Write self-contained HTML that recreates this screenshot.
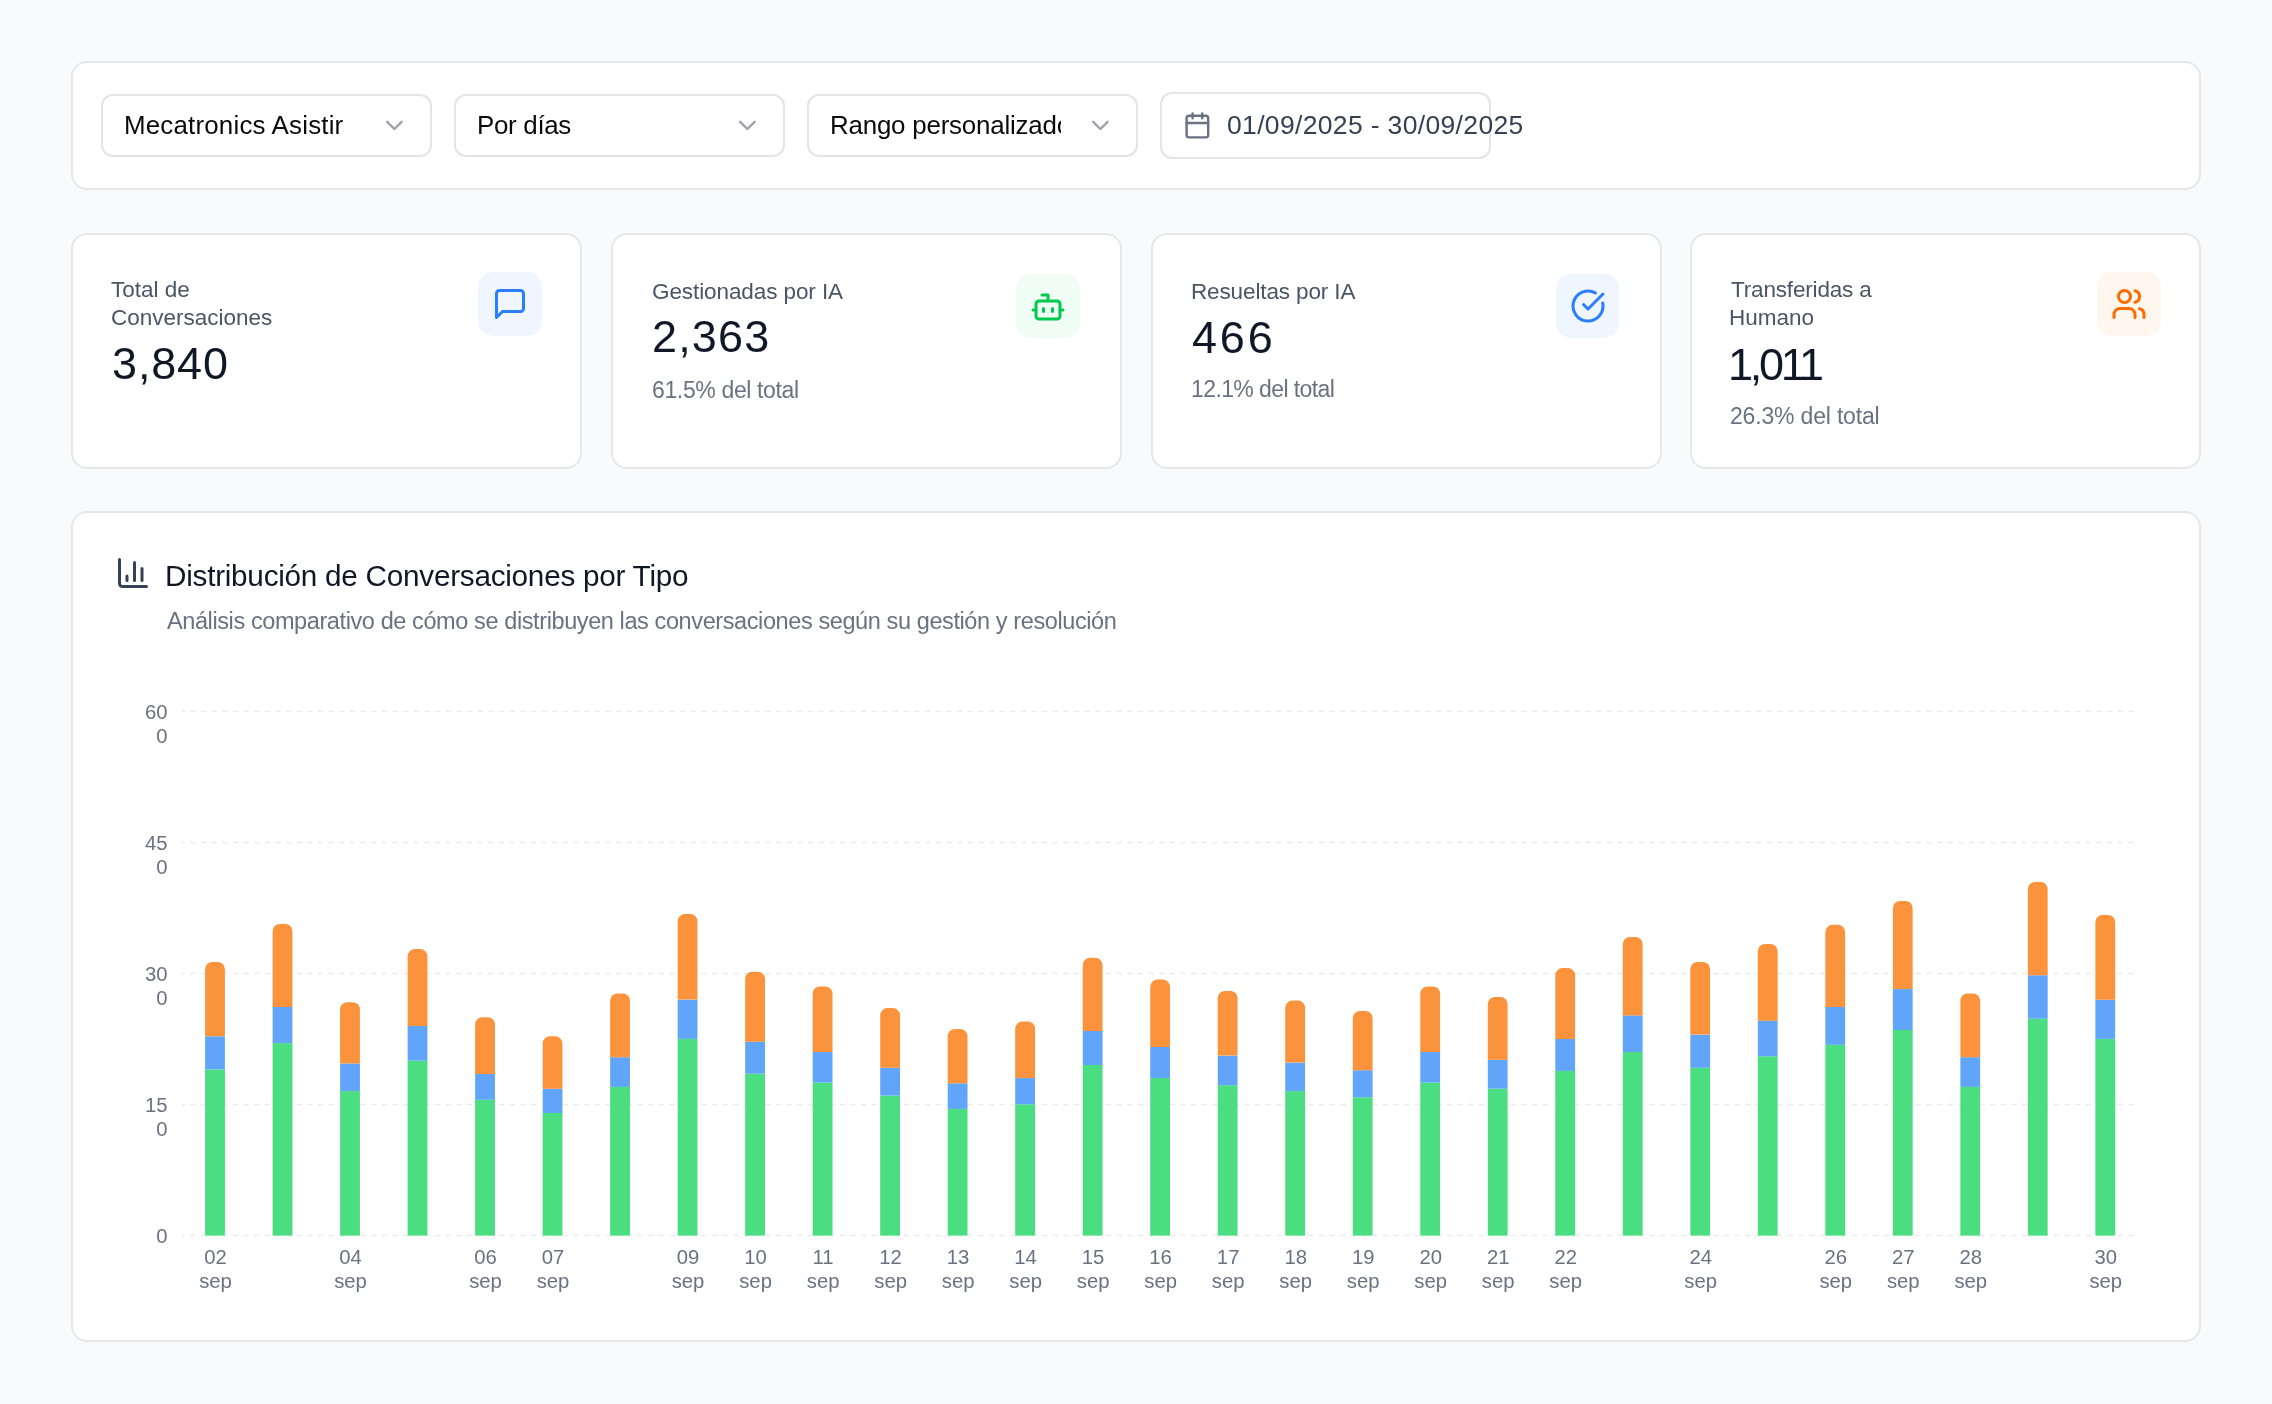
<!DOCTYPE html>
<html><head><meta charset="utf-8">
<style>
html,body{margin:0;padding:0;}
body{width:2272px;height:1404px;overflow:hidden;background:#f9fafb;position:relative;font-family:"Liberation Sans",sans-serif;}
.card{position:absolute;box-sizing:border-box;background:#fff;border:2px solid #e5e7eb;border-radius:16px;}
.sel{position:absolute;box-sizing:border-box;background:#fff;border:2px solid #e4e4e8;border-radius:12px;}
.t{position:absolute;white-space:nowrap;line-height:1;will-change:transform;}
.chev{position:absolute;color:#a1a1aa;}
.ib{position:absolute;border-radius:15px;}
.ib svg{position:absolute;left:50%;top:50%;margin-left:-18px;margin-top:-18px;}
.ax{font-family:"Liberation Sans",sans-serif;font-size:20.3px;fill:#6a7282;}
</style></head>
<body>
<div class="card" style="left:71px;top:61px;width:2130px;height:129px"></div>
<div class="sel" style="left:101px;top:93.5px;width:331px;height:63.5px"></div>
<div class="sel" style="left:454px;top:93.5px;width:331px;height:63.5px"></div>
<div class="sel" style="left:807px;top:93.5px;width:331px;height:63.5px"></div>
<div class="sel" style="left:1159.5px;top:92px;width:331px;height:67px"></div>
<div class="t" style="left:124.2px;top:112.68px;font-size:25.9px;color:#0a0a0a;letter-spacing:0.19px;">Mecatronics Asistir</div>
<div class="t" style="left:476.6px;top:112.68px;font-size:25.9px;color:#0a0a0a;letter-spacing:-0.3px;">Por días</div>
<div style="position:absolute;left:820px;top:100px;width:240.5px;height:50px;overflow:hidden"><div class="t" style="left:9.9px;top:12.68px;font-size:25.9px;color:#0a0a0a;letter-spacing:-0.2px;">Rango personalizado</div></div>
<div class="chev" style="left:380.2px;top:111.4px"><svg class="chev" viewBox="0 0 24 24" width="28.8" height="28.8" fill="none" stroke="currentColor" stroke-width="2" stroke-linecap="round" stroke-linejoin="round"><path d="m6 9 6 6 6-6"/></svg></div>
<div class="chev" style="left:733.1px;top:111.4px"><svg class="chev" viewBox="0 0 24 24" width="28.8" height="28.8" fill="none" stroke="currentColor" stroke-width="2" stroke-linecap="round" stroke-linejoin="round"><path d="m6 9 6 6 6-6"/></svg></div>
<div class="chev" style="left:1085.7px;top:111.4px"><svg class="chev" viewBox="0 0 24 24" width="28.8" height="28.8" fill="none" stroke="currentColor" stroke-width="2" stroke-linecap="round" stroke-linejoin="round"><path d="m6 9 6 6 6-6"/></svg></div>
<svg style="position:absolute;left:1182.6px;top:111px" viewBox="0 0 24 24" width="28.8" height="28.8" fill="none" stroke="#6a7282" stroke-width="2" stroke-linecap="round" stroke-linejoin="round"><path d="M8 2v4"/><path d="M16 2v4"/><rect width="18" height="18" x="3" y="4" rx="2"/><path d="M3 10h18"/></svg>
<div class="t" style="left:1226.6px;top:111.87px;font-size:26.5px;color:#364153;letter-spacing:0.34px;">01/09/2025 - 30/09/2025</div>

<div class="card" style="left:71px;top:232.5px;width:511px;height:236px"></div>
<div class="card" style="left:611px;top:232.5px;width:511px;height:236px"></div>
<div class="card" style="left:1150.5px;top:232.5px;width:511px;height:236px"></div>
<div class="card" style="left:1690px;top:232.5px;width:511px;height:236px"></div>

<div class="t" style="left:111px;top:278.75px;font-size:22.5px;color:#4a5565;letter-spacing:0px;">Total de</div>
<div class="t" style="left:111px;top:306.85px;font-size:22.5px;color:#4a5565;letter-spacing:0px;">Conversaciones</div>
<div class="t" style="left:111.8px;top:340.91px;font-size:45px;color:#101828;letter-spacing:0.85px;">3,840</div>
<div class="ib" style="left:478.4px;top:272.1px;width:63.5px;height:64px;background:#eff6ff"><svg viewBox="0 0 24 24" width="36" height="36" fill="none" stroke="#2b7fff" stroke-width="2" stroke-linecap="round" stroke-linejoin="round"><path d="M21 15a2 2 0 0 1-2 2H7l-4 4V5a2 2 0 0 1 2-2h14a2 2 0 0 1 2 2z"/></svg></div>

<div class="t" style="left:652.2px;top:280.75px;font-size:22.5px;color:#4a5565;letter-spacing:-0.09px;">Gestionadas por IA</div>
<div class="t" style="left:652.2px;top:313.91px;font-size:45px;color:#101828;letter-spacing:1.15px;">2,363</div>
<div class="t" style="left:652.2px;top:378.73px;font-size:23px;color:#6a7282;letter-spacing:-0.36px;">61.5% del total</div>
<div class="ib" style="left:1016px;top:273.8px;width:64px;height:64.4px;background:#f0fdf4"><svg style="margin-top:-17.2px" viewBox="0 0 24 24" width="36" height="36" fill="none" stroke="#00c950" stroke-width="2" stroke-linecap="round" stroke-linejoin="round"><path d="M12 8V4H8"/><rect width="16" height="12" x="4" y="8" rx="2"/><path d="M2 14h2"/><path d="M20 14h2"/><path d="M15 13v2"/><path d="M9 13v2"/></svg></div>

<div class="t" style="left:1191px;top:281.25px;font-size:22.5px;color:#4a5565;letter-spacing:-0.13px;">Resueltas por IA</div>
<div class="t" style="left:1192px;top:315.01px;font-size:45px;color:#101828;letter-spacing:2.8px;">466</div>
<div class="t" style="left:1191px;top:378.03px;font-size:23px;color:#6a7282;letter-spacing:-0.6px;">12.1% del total</div>
<div class="ib" style="left:1555.7px;top:274.2px;width:63.8px;height:64px;background:#eff6ff"><svg viewBox="0 0 24 24" width="36" height="36" fill="none" stroke="#2b7fff" stroke-width="2" stroke-linecap="round" stroke-linejoin="round"><path d="M21.801 10A10 10 0 1 1 17 3.335"/><path d="m9 11 3 3L22 4"/></svg></div>

<div class="t" style="left:1731px;top:279.25px;font-size:22.5px;color:#4a5565;letter-spacing:-0.17px;">Transferidas a</div>
<div class="t" style="left:1729px;top:306.85px;font-size:22.5px;color:#4a5565;letter-spacing:0px;">Humano</div>
<div class="t" style="left:1728px;top:341.61px;font-size:45px;color:#101828;letter-spacing:-3.3px;">1,011</div>
<div class="t" style="left:1730px;top:405.13px;font-size:23px;color:#6a7282;letter-spacing:-0.18px;">26.3% del total</div>
<div class="ib" style="left:2097.3px;top:272.3px;width:63.5px;height:63.8px;background:#fff7ed"><svg viewBox="0 0 24 24" width="36" height="36" fill="none" stroke="#ff6900" stroke-width="2" stroke-linecap="round" stroke-linejoin="round"><path d="M16 21v-2a4 4 0 0 0-4-4H6a4 4 0 0 0-4 4v2"/><circle cx="9" cy="7" r="4"/><path d="M22 21v-2a4 4 0 0 0-3-3.87"/><path d="M16 3.13a4 4 0 0 1 0 7.75"/></svg></div>

<div class="card" style="left:71px;top:511px;width:2130px;height:830.6px"></div>
<svg style="position:absolute;left:115.2px;top:555.4px" viewBox="0 0 24 24" width="36" height="36" fill="none" stroke="#364153" stroke-width="2" stroke-linecap="round" stroke-linejoin="round"><path d="M3 3v16a2 2 0 0 0 2 2h16"/><path d="M18 17V9"/><path d="M13 17V5"/><path d="M8 17v-3"/></svg>
<div class="t" style="left:165.1px;top:561.06px;font-size:29.7px;color:#101828;letter-spacing:-0.25px;">Distribución de Conversaciones por Tipo</div>
<div class="t" style="left:166.7px;top:610.11px;font-size:23.5px;color:#6a7282;letter-spacing:-0.4px;">Análisis comparativo de cómo se distribuyen las conversaciones según su gestión y resolución</div>

<svg style="position:absolute;left:0;top:0;will-change:transform" width="2272" height="1404" viewBox="0 0 2272 1404">
<line x1="182" y1="711.5" x2="2139.7" y2="711.5" stroke="#ebebed" stroke-width="1.5" stroke-dasharray="5.4 5.25" stroke-dashoffset="2.6"/>
<line x1="182" y1="842.5" x2="2139.7" y2="842.5" stroke="#ebebed" stroke-width="1.5" stroke-dasharray="5.4 5.25" stroke-dashoffset="2.6"/>
<line x1="182" y1="973.5" x2="2139.7" y2="973.5" stroke="#ebebed" stroke-width="1.5" stroke-dasharray="5.4 5.25" stroke-dashoffset="2.6"/>
<line x1="182" y1="1104.5" x2="2139.7" y2="1104.5" stroke="#ebebed" stroke-width="1.5" stroke-dasharray="5.4 5.25" stroke-dashoffset="2.6"/>
<line x1="182" y1="1235.4" x2="2139.7" y2="1235.4" stroke="#ebebed" stroke-width="1.5" stroke-dasharray="5.4 5.25" stroke-dashoffset="2.6"/>
<rect x="205.1" y="1069.4" width="19.8" height="166.2" fill="#4ade80"/>
<rect x="205.1" y="1036.3" width="19.8" height="33.1" fill="#60a5fa"/>
<path d="M205.1 1036.3V969.2a7.2 7.2 0 0 1 7.2 -7.2h5.4a7.2 7.2 0 0 1 7.2 7.2V1036.3z" fill="#fb923c"/>
<rect x="272.61" y="1043.1" width="19.8" height="192.5" fill="#4ade80"/>
<rect x="272.61" y="1006.9" width="19.8" height="36.2" fill="#60a5fa"/>
<path d="M272.61 1006.9V931.1a7.2 7.2 0 0 1 7.2 -7.2h5.4a7.2 7.2 0 0 1 7.2 7.2V1006.9z" fill="#fb923c"/>
<rect x="340.12" y="1091.1" width="19.8" height="144.5" fill="#4ade80"/>
<rect x="340.12" y="1063.5" width="19.8" height="27.6" fill="#60a5fa"/>
<path d="M340.12 1063.5V1009.4a7.2 7.2 0 0 1 7.2 -7.2h5.4a7.2 7.2 0 0 1 7.2 7.2V1063.5z" fill="#fb923c"/>
<rect x="407.63" y="1060.7" width="19.8" height="174.9" fill="#4ade80"/>
<rect x="407.63" y="1025.9" width="19.8" height="34.8" fill="#60a5fa"/>
<path d="M407.63 1025.9V956.3a7.2 7.2 0 0 1 7.2 -7.2h5.4a7.2 7.2 0 0 1 7.2 7.2V1025.9z" fill="#fb923c"/>
<rect x="475.14" y="1099.8" width="19.8" height="135.8" fill="#4ade80"/>
<rect x="475.14" y="1073.9" width="19.8" height="25.9" fill="#60a5fa"/>
<path d="M475.14 1073.9V1024.4a7.2 7.2 0 0 1 7.2 -7.2h5.4a7.2 7.2 0 0 1 7.2 7.2V1073.9z" fill="#fb923c"/>
<rect x="542.65" y="1113" width="19.8" height="122.6" fill="#4ade80"/>
<rect x="542.65" y="1088.7" width="19.8" height="24.3" fill="#60a5fa"/>
<path d="M542.65 1088.7V1043.5a7.2 7.2 0 0 1 7.2 -7.2h5.4a7.2 7.2 0 0 1 7.2 7.2V1088.7z" fill="#fb923c"/>
<rect x="610.16" y="1086.9" width="19.8" height="148.7" fill="#4ade80"/>
<rect x="610.16" y="1057.2" width="19.8" height="29.7" fill="#60a5fa"/>
<path d="M610.16 1057.2V1000.7a7.2 7.2 0 0 1 7.2 -7.2h5.4a7.2 7.2 0 0 1 7.2 7.2V1057.2z" fill="#fb923c"/>
<rect x="677.67" y="1038.9" width="19.8" height="196.7" fill="#4ade80"/>
<rect x="677.67" y="999.6" width="19.8" height="39.3" fill="#60a5fa"/>
<path d="M677.67 999.6V921.3a7.2 7.2 0 0 1 7.2 -7.2h5.4a7.2 7.2 0 0 1 7.2 7.2V999.6z" fill="#fb923c"/>
<rect x="745.18" y="1073.7" width="19.8" height="161.9" fill="#4ade80"/>
<rect x="745.18" y="1041.7" width="19.8" height="32" fill="#60a5fa"/>
<path d="M745.18 1041.7V978.9a7.2 7.2 0 0 1 7.2 -7.2h5.4a7.2 7.2 0 0 1 7.2 7.2V1041.7z" fill="#fb923c"/>
<rect x="812.69" y="1082.6" width="19.8" height="153" fill="#4ade80"/>
<rect x="812.69" y="1052" width="19.8" height="30.6" fill="#60a5fa"/>
<path d="M812.69 1052V993.7a7.2 7.2 0 0 1 7.2 -7.2h5.4a7.2 7.2 0 0 1 7.2 7.2V1052z" fill="#fb923c"/>
<rect x="880.2" y="1095.6" width="19.8" height="140" fill="#4ade80"/>
<rect x="880.2" y="1067.8" width="19.8" height="27.8" fill="#60a5fa"/>
<path d="M880.2 1067.8V1015.3a7.2 7.2 0 0 1 7.2 -7.2h5.4a7.2 7.2 0 0 1 7.2 7.2V1067.8z" fill="#fb923c"/>
<rect x="947.71" y="1108.9" width="19.8" height="126.7" fill="#4ade80"/>
<rect x="947.71" y="1083.3" width="19.8" height="25.6" fill="#60a5fa"/>
<path d="M947.71 1083.3V1036.3a7.2 7.2 0 0 1 7.2 -7.2h5.4a7.2 7.2 0 0 1 7.2 7.2V1083.3z" fill="#fb923c"/>
<rect x="1015.22" y="1104.3" width="19.8" height="131.3" fill="#4ade80"/>
<rect x="1015.22" y="1078.1" width="19.8" height="26.2" fill="#60a5fa"/>
<path d="M1015.22 1078.1V1028.7a7.2 7.2 0 0 1 7.2 -7.2h5.4a7.2 7.2 0 0 1 7.2 7.2V1078.1z" fill="#fb923c"/>
<rect x="1082.73" y="1065" width="19.8" height="170.6" fill="#4ade80"/>
<rect x="1082.73" y="1030.9" width="19.8" height="34.1" fill="#60a5fa"/>
<path d="M1082.73 1030.9V965a7.2 7.2 0 0 1 7.2 -7.2h5.4a7.2 7.2 0 0 1 7.2 7.2V1030.9z" fill="#fb923c"/>
<rect x="1150.24" y="1078" width="19.8" height="157.6" fill="#4ade80"/>
<rect x="1150.24" y="1046.9" width="19.8" height="31.1" fill="#60a5fa"/>
<path d="M1150.24 1046.9V986.8a7.2 7.2 0 0 1 7.2 -7.2h5.4a7.2 7.2 0 0 1 7.2 7.2V1046.9z" fill="#fb923c"/>
<rect x="1217.75" y="1085.2" width="19.8" height="150.4" fill="#4ade80"/>
<rect x="1217.75" y="1055.6" width="19.8" height="29.6" fill="#60a5fa"/>
<path d="M1217.75 1055.6V998.1a7.2 7.2 0 0 1 7.2 -7.2h5.4a7.2 7.2 0 0 1 7.2 7.2V1055.6z" fill="#fb923c"/>
<rect x="1285.26" y="1091.1" width="19.8" height="144.5" fill="#4ade80"/>
<rect x="1285.26" y="1062.6" width="19.8" height="28.5" fill="#60a5fa"/>
<path d="M1285.26 1062.6V1007.8a7.2 7.2 0 0 1 7.2 -7.2h5.4a7.2 7.2 0 0 1 7.2 7.2V1062.6z" fill="#fb923c"/>
<rect x="1352.77" y="1097.2" width="19.8" height="138.4" fill="#4ade80"/>
<rect x="1352.77" y="1070.2" width="19.8" height="27" fill="#60a5fa"/>
<path d="M1352.77 1070.2V1018.1a7.2 7.2 0 0 1 7.2 -7.2h5.4a7.2 7.2 0 0 1 7.2 7.2V1070.2z" fill="#fb923c"/>
<rect x="1420.28" y="1082.6" width="19.8" height="153" fill="#4ade80"/>
<rect x="1420.28" y="1052" width="19.8" height="30.6" fill="#60a5fa"/>
<path d="M1420.28 1052V993.7a7.2 7.2 0 0 1 7.2 -7.2h5.4a7.2 7.2 0 0 1 7.2 7.2V1052z" fill="#fb923c"/>
<rect x="1487.79" y="1088.7" width="19.8" height="146.9" fill="#4ade80"/>
<rect x="1487.79" y="1059.8" width="19.8" height="28.9" fill="#60a5fa"/>
<path d="M1487.79 1059.8V1004.2a7.2 7.2 0 0 1 7.2 -7.2h5.4a7.2 7.2 0 0 1 7.2 7.2V1059.8z" fill="#fb923c"/>
<rect x="1555.3" y="1070.9" width="19.8" height="164.7" fill="#4ade80"/>
<rect x="1555.3" y="1038.9" width="19.8" height="32" fill="#60a5fa"/>
<path d="M1555.3 1038.9V975.3a7.2 7.2 0 0 1 7.2 -7.2h5.4a7.2 7.2 0 0 1 7.2 7.2V1038.9z" fill="#fb923c"/>
<rect x="1622.81" y="1052" width="19.8" height="183.6" fill="#4ade80"/>
<rect x="1622.81" y="1015.4" width="19.8" height="36.6" fill="#60a5fa"/>
<path d="M1622.81 1015.4V944.1a7.2 7.2 0 0 1 7.2 -7.2h5.4a7.2 7.2 0 0 1 7.2 7.2V1015.4z" fill="#fb923c"/>
<rect x="1690.32" y="1067.8" width="19.8" height="167.8" fill="#4ade80"/>
<rect x="1690.32" y="1034.6" width="19.8" height="33.2" fill="#60a5fa"/>
<path d="M1690.32 1034.6V969.2a7.2 7.2 0 0 1 7.2 -7.2h5.4a7.2 7.2 0 0 1 7.2 7.2V1034.6z" fill="#fb923c"/>
<rect x="1757.83" y="1056.3" width="19.8" height="179.3" fill="#4ade80"/>
<rect x="1757.83" y="1020.7" width="19.8" height="35.6" fill="#60a5fa"/>
<path d="M1757.83 1020.7V951.1a7.2 7.2 0 0 1 7.2 -7.2h5.4a7.2 7.2 0 0 1 7.2 7.2V1020.7z" fill="#fb923c"/>
<rect x="1825.34" y="1044.8" width="19.8" height="190.8" fill="#4ade80"/>
<rect x="1825.34" y="1006.9" width="19.8" height="37.9" fill="#60a5fa"/>
<path d="M1825.34 1006.9V932a7.2 7.2 0 0 1 7.2 -7.2h5.4a7.2 7.2 0 0 1 7.2 7.2V1006.9z" fill="#fb923c"/>
<rect x="1892.85" y="1030" width="19.8" height="205.6" fill="#4ade80"/>
<rect x="1892.85" y="989.1" width="19.8" height="40.9" fill="#60a5fa"/>
<path d="M1892.85 989.1V908.1a7.2 7.2 0 0 1 7.2 -7.2h5.4a7.2 7.2 0 0 1 7.2 7.2V989.1z" fill="#fb923c"/>
<rect x="1960.36" y="1086.9" width="19.8" height="148.7" fill="#4ade80"/>
<rect x="1960.36" y="1057.2" width="19.8" height="29.7" fill="#60a5fa"/>
<path d="M1960.36 1057.2V1000.7a7.2 7.2 0 0 1 7.2 -7.2h5.4a7.2 7.2 0 0 1 7.2 7.2V1057.2z" fill="#fb923c"/>
<rect x="2027.87" y="1018.7" width="19.8" height="216.9" fill="#4ade80"/>
<rect x="2027.87" y="975.2" width="19.8" height="43.5" fill="#60a5fa"/>
<path d="M2027.87 975.2V889.1a7.2 7.2 0 0 1 7.2 -7.2h5.4a7.2 7.2 0 0 1 7.2 7.2V975.2z" fill="#fb923c"/>
<rect x="2095.38" y="1038.9" width="19.8" height="196.7" fill="#4ade80"/>
<rect x="2095.38" y="999.8" width="19.8" height="39.1" fill="#60a5fa"/>
<path d="M2095.38 999.8V922.2a7.2 7.2 0 0 1 7.2 -7.2h5.4a7.2 7.2 0 0 1 7.2 7.2V999.8z" fill="#fb923c"/>
<text x="167.6" y="718.85" text-anchor="end" class="ax">60</text>
<text x="167.6" y="742.85" text-anchor="end" class="ax">0</text>
<text x="167.6" y="849.9" text-anchor="end" class="ax">45</text>
<text x="167.6" y="873.9" text-anchor="end" class="ax">0</text>
<text x="167.6" y="980.95" text-anchor="end" class="ax">30</text>
<text x="167.6" y="1004.95" text-anchor="end" class="ax">0</text>
<text x="167.6" y="1112" text-anchor="end" class="ax">15</text>
<text x="167.6" y="1136" text-anchor="end" class="ax">0</text>
<text x="167.6" y="1243.05" text-anchor="end" class="ax">0</text>
<text x="215.5" y="1263.8" text-anchor="middle" class="ax">02</text>
<text x="215.5" y="1287.9" text-anchor="middle" class="ax">sep</text>
<text x="350.52" y="1263.8" text-anchor="middle" class="ax">04</text>
<text x="350.52" y="1287.9" text-anchor="middle" class="ax">sep</text>
<text x="485.54" y="1263.8" text-anchor="middle" class="ax">06</text>
<text x="485.54" y="1287.9" text-anchor="middle" class="ax">sep</text>
<text x="553.05" y="1263.8" text-anchor="middle" class="ax">07</text>
<text x="553.05" y="1287.9" text-anchor="middle" class="ax">sep</text>
<text x="688.07" y="1263.8" text-anchor="middle" class="ax">09</text>
<text x="688.07" y="1287.9" text-anchor="middle" class="ax">sep</text>
<text x="755.58" y="1263.8" text-anchor="middle" class="ax">10</text>
<text x="755.58" y="1287.9" text-anchor="middle" class="ax">sep</text>
<text x="823.09" y="1263.8" text-anchor="middle" class="ax">11</text>
<text x="823.09" y="1287.9" text-anchor="middle" class="ax">sep</text>
<text x="890.6" y="1263.8" text-anchor="middle" class="ax">12</text>
<text x="890.6" y="1287.9" text-anchor="middle" class="ax">sep</text>
<text x="958.11" y="1263.8" text-anchor="middle" class="ax">13</text>
<text x="958.11" y="1287.9" text-anchor="middle" class="ax">sep</text>
<text x="1025.62" y="1263.8" text-anchor="middle" class="ax">14</text>
<text x="1025.62" y="1287.9" text-anchor="middle" class="ax">sep</text>
<text x="1093.13" y="1263.8" text-anchor="middle" class="ax">15</text>
<text x="1093.13" y="1287.9" text-anchor="middle" class="ax">sep</text>
<text x="1160.64" y="1263.8" text-anchor="middle" class="ax">16</text>
<text x="1160.64" y="1287.9" text-anchor="middle" class="ax">sep</text>
<text x="1228.15" y="1263.8" text-anchor="middle" class="ax">17</text>
<text x="1228.15" y="1287.9" text-anchor="middle" class="ax">sep</text>
<text x="1295.66" y="1263.8" text-anchor="middle" class="ax">18</text>
<text x="1295.66" y="1287.9" text-anchor="middle" class="ax">sep</text>
<text x="1363.17" y="1263.8" text-anchor="middle" class="ax">19</text>
<text x="1363.17" y="1287.9" text-anchor="middle" class="ax">sep</text>
<text x="1430.68" y="1263.8" text-anchor="middle" class="ax">20</text>
<text x="1430.68" y="1287.9" text-anchor="middle" class="ax">sep</text>
<text x="1498.19" y="1263.8" text-anchor="middle" class="ax">21</text>
<text x="1498.19" y="1287.9" text-anchor="middle" class="ax">sep</text>
<text x="1565.7" y="1263.8" text-anchor="middle" class="ax">22</text>
<text x="1565.7" y="1287.9" text-anchor="middle" class="ax">sep</text>
<text x="1700.72" y="1263.8" text-anchor="middle" class="ax">24</text>
<text x="1700.72" y="1287.9" text-anchor="middle" class="ax">sep</text>
<text x="1835.74" y="1263.8" text-anchor="middle" class="ax">26</text>
<text x="1835.74" y="1287.9" text-anchor="middle" class="ax">sep</text>
<text x="1903.25" y="1263.8" text-anchor="middle" class="ax">27</text>
<text x="1903.25" y="1287.9" text-anchor="middle" class="ax">sep</text>
<text x="1970.76" y="1263.8" text-anchor="middle" class="ax">28</text>
<text x="1970.76" y="1287.9" text-anchor="middle" class="ax">sep</text>
<text x="2105.78" y="1263.8" text-anchor="middle" class="ax">30</text>
<text x="2105.78" y="1287.9" text-anchor="middle" class="ax">sep</text>
</svg>
</body></html>
